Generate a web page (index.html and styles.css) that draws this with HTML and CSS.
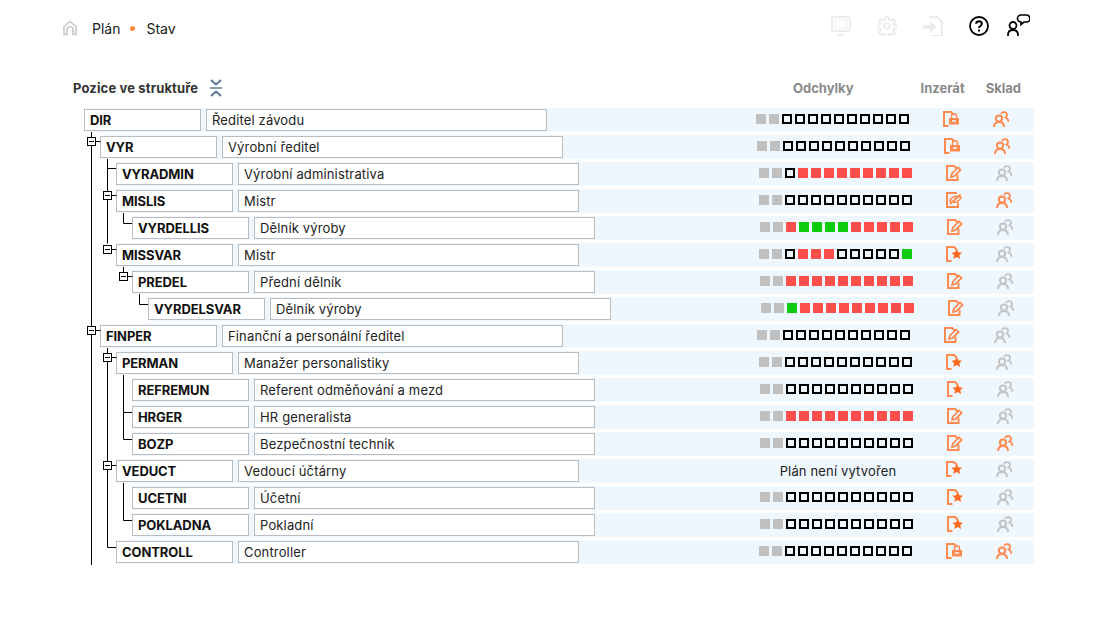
FILE: index.html
```html
<!DOCTYPE html>
<html lang="cs">
<head>
<meta charset="utf-8">
<title>Plán – Stav</title>
<link rel="stylesheet" href="styles.css">
</head>
<body>
<svg class="defs" width="0" height="0" aria-hidden="true">
  <symbol id="i-lock" viewBox="0 0 16 16">
    <path d="M5.500 15H1V1h7l2.800 2.800" fill="none" stroke="currentColor" stroke-width="2"/>
    <path d="M8.500 7V5.200a2.500 2.500 0 0 1 5 0V7" fill="none" stroke="currentColor" stroke-width="1.400"/>
    <path d="M6 7h10v6.500H6z M9 9.300v1.500h4V9.300z" fill="currentColor" fill-rule="evenodd"/>
  </symbol>
  <symbol id="i-edit" viewBox="0 0 16 16">
    <path d="M11.500 9.500V15H1V1h7.300L11 3.700" fill="none" stroke="currentColor" stroke-width="2"/>
    <path d="M5 12l.8-3.300 6.300-6.300 2.500 2.500-6.300 6.300z" fill="none" stroke="currentColor" stroke-width="1.800"/>
  </symbol>
  <symbol id="i-edit-x" viewBox="0 0 16 16">
    <path d="M12 10.500V15H1V1h10" fill="none" stroke="currentColor" stroke-width="2"/>
    <path d="M3.500 8.500C6 4.500 11 3 15.200 5.500 13 10 8 12 3.500 8.500z" fill="none" stroke="currentColor" stroke-width="1.500"/>
    <path d="M4 12L14.500 2.500" fill="none" stroke="currentColor" stroke-width="2"/>
  </symbol>
  <symbol id="i-star" viewBox="0 0 16 16">
    <path d="M5.500 15H1V1h7l2.800 2.800" fill="none" stroke="currentColor" stroke-width="2"/>
    <path class="star" d="M10.700 2.800l1.700 3.500 3.600.4-2.700 2.500.8 3.800-3.400-1.900L7.300 13l.8-3.800L5.400 6.700l3.700-.4z"/>
  </symbol>
  <symbol id="i-users" viewBox="0 0 16 16">
    <circle cx="6" cy="7.600" r="3.100" fill="none" stroke="currentColor" stroke-width="2"/>
    <path d="M1 16c0-3.500 2-5 5-5s5 1.500 5 5" fill="none" stroke="currentColor" stroke-width="2"/>
    <path d="M8 3C9 .4 14 .4 14 4c0 1-.5 2-1.500 2.500 1.700.6 3 2 3 4.500" fill="none" stroke="currentColor" stroke-width="1.800"/>
  </symbol>
</svg>

<header class="topbar">
  <nav class="crumbs">
    <svg class="home" viewBox="0 0 16 16" width="16" height="16"><path d="M2 14.500V6.500L8 1.500l6 5v8h-3V9.500a3 3 0 0 0-6 0v5z" fill="none" stroke="currentColor" stroke-width="1.600"/></svg>
    <span class="crumb">Plán</span>
    <span class="dot"></span>
    <span class="crumb">Stav</span>
  </nav>
  <div class="tools">
    <svg class="tool off" viewBox="0 0 20 20" width="20" height="20"><rect x="1" y="1" width="18" height="14" rx="2" fill="none" stroke="currentColor" stroke-width="2"/><path d="M4 4h12v8H4z" fill="none" stroke="currentColor" stroke-width="1"/><path d="M7 18h6v2H7z" fill="currentColor"/></svg>
    <svg class="tool off" viewBox="0 0 20 20" width="20" height="20"><circle cx="10" cy="10" r="2.800" fill="none" stroke="currentColor" stroke-width="2"/><path d="M8.500 1h3l.5 2.600 1.800.8 2.200-1.500 2 2.100-1.500 2.200.8 1.800 2.600.5v3l-2.600.5-.8 1.800 1.500 2.200-2 2.100-2.200-1.500-1.800.8-.5 2.600h-3l-.5-2.600-1.800-.8-2.200 1.500-2-2.100 1.500-2.200-.8-1.800-2.600-.5v-3l2.600-.5.8-1.800-1.500-2.200 2-2.100 2.200 1.500 1.800-.8z" fill="none" stroke="currentColor" stroke-width="2"/></svg>
    <svg class="tool off" viewBox="0 0 20 20" width="20" height="20"><path d="M7 3V1h7l5 5v14H8" fill="none" stroke="currentColor" stroke-width="2"/><path d="M0 9h7V5l6.500 6L7 17v-4H0z" fill="currentColor"/></svg>
    <svg class="tool" viewBox="0 0 20 20" width="20" height="20"><circle cx="10" cy="10" r="9" fill="none" stroke="currentColor" stroke-width="1.800"/><path d="M7.200 7.800c0-3.500 5.600-3.500 5.600 0 0 2.300-2.800 2.100-2.800 4.200" fill="none" stroke="currentColor" stroke-width="2"/><path d="M9 13.500h2v2H9z" fill="currentColor"/></svg>
    <svg class="tool chat" viewBox="0 0 23 23" width="23" height="23"><circle cx="6" cy="11.500" r="3.500" fill="none" stroke="currentColor" stroke-width="1.800"/><path d="M1 22v-1c0-3 2-5 5-5s5 2 5 5v1" fill="none" stroke="currentColor" stroke-width="1.800"/><path d="M14 1h5.500A3.500 3.500 0 0 1 23 4.500 3.500 3.500 0 0 1 19.500 8H17l-3 2.500V8a3.500 3.500 0 0 1-3.500-3.500A3.500 3.500 0 0 1 14 1z" fill="none" stroke="currentColor" stroke-width="1.700"/></svg>
  </div>
</header>

<section class="table">
  <div class="thead">
    <span class="th-main">Pozice ve struktuře</span>
    <svg class="collapse" viewBox="0 0 12 18" width="12" height="18"><path d="M1 1l5 4.500L11 1M1 17l5-4.500 5 4.500" fill="none" stroke="currentColor" stroke-width="1.800"/><path d="M0 8.300h12v1.400H0z" fill="currentColor"/></svg>
    <div class="th-cols">
      <span class="th-col dev-h">Odchylky</span>
      <span class="th-col ins-h">Inzerát</span>
      <span class="th-col">Sklad</span>
    </div>
  </div>

  <div class="tbody">
    <svg class="lines" width="100" height="460" viewBox="0 0 100 460" aria-hidden="true">
      <g class="ln">
        <path d="M7.500 24V457"/>
        <path d="M23.500 51V135.500M23.500 60.500H32M23.500 240V439.500H32"/>
        <path d="M39.500 105V115.500H48M39.500 159V164M39.500 267V331.500H48M39.500 304.500H48M39.500 375V412.500H48"/>
        <path d="M55.500 186V196.500H64"/>
        <path d="M12 33.500h4.500M12 222.500h4.500M28 87.500h4.500M28 141.500h4.500M28 249.500h4.500M28 357.500h4.500M44 168.500h4.500"/>
      </g>
      <g class="tg"><rect x="3.500" y="29.500" width="8" height="8"/><path d="M5 33.500h5"/></g>
      <g class="tg"><rect x="3.500" y="218.500" width="8" height="8"/><path d="M5 222.500h5"/></g>
      <g class="tg"><rect x="19.500" y="83.500" width="8" height="8"/><path d="M21 87.500h5"/></g>
      <g class="tg"><rect x="19.500" y="137.500" width="8" height="8"/><path d="M21 141.500h5"/></g>
      <g class="tg"><rect x="19.500" y="245.500" width="8" height="8"/><path d="M21 249.500h5"/></g>
      <g class="tg"><rect x="19.500" y="353.500" width="8" height="8"/><path d="M21 357.500h5"/></g>
      <g class="tg"><rect x="35.500" y="164.500" width="8" height="8"/><path d="M37 168.500h5"/></g>
    </svg>

    <div class="row l0"><span class="code">DIR</span><span class="name">Ředitel závodu</span>
      <div class="stats"><div class="dev"><i class="g"></i><i class="g"></i><i class="o"></i><i class="o"></i><i class="o"></i><i class="o"></i><i class="o"></i><i class="o"></i><i class="o"></i><i class="o"></i><i class="o"></i><i class="o"></i></div>
      <svg class="ico on"><use href="#i-lock"/></svg><svg class="ico on"><use href="#i-users"/></svg></div></div>

    <div class="row l1"><span class="code">VYR</span><span class="name">Výrobní ředitel</span>
      <div class="stats"><div class="dev"><i class="g"></i><i class="g"></i><i class="o"></i><i class="o"></i><i class="o"></i><i class="o"></i><i class="o"></i><i class="o"></i><i class="o"></i><i class="o"></i><i class="o"></i><i class="o"></i></div>
      <svg class="ico on"><use href="#i-lock"/></svg><svg class="ico on"><use href="#i-users"/></svg></div></div>

    <div class="row l2"><span class="code">VYRADMIN</span><span class="name">Výrobní administrativa</span>
      <div class="stats"><div class="dev"><i class="g"></i><i class="g"></i><i class="o"></i><i class="r"></i><i class="r"></i><i class="r"></i><i class="r"></i><i class="r"></i><i class="r"></i><i class="r"></i><i class="r"></i><i class="r"></i></div>
      <svg class="ico on"><use href="#i-edit"/></svg><svg class="ico off"><use href="#i-users"/></svg></div></div>

    <div class="row l2"><span class="code">MISLIS</span><span class="name">Mistr</span>
      <div class="stats"><div class="dev"><i class="g"></i><i class="g"></i><i class="o"></i><i class="o"></i><i class="o"></i><i class="o"></i><i class="o"></i><i class="o"></i><i class="o"></i><i class="o"></i><i class="o"></i><i class="o"></i></div>
      <svg class="ico on"><use href="#i-edit-x"/></svg><svg class="ico on"><use href="#i-users"/></svg></div></div>

    <div class="row l3"><span class="code">VYRDELLIS</span><span class="name">Dělník výroby</span>
      <div class="stats"><div class="dev"><i class="g"></i><i class="g"></i><i class="r"></i><i class="v"></i><i class="v"></i><i class="v"></i><i class="v"></i><i class="r"></i><i class="r"></i><i class="r"></i><i class="r"></i><i class="r"></i></div>
      <svg class="ico on"><use href="#i-edit"/></svg><svg class="ico off"><use href="#i-users"/></svg></div></div>

    <div class="row l2"><span class="code">MISSVAR</span><span class="name">Mistr</span>
      <div class="stats"><div class="dev"><i class="g"></i><i class="g"></i><i class="o"></i><i class="r"></i><i class="r"></i><i class="r"></i><i class="o"></i><i class="o"></i><i class="o"></i><i class="o"></i><i class="o"></i><i class="v"></i></div>
      <svg class="ico on"><use href="#i-star"/></svg><svg class="ico off"><use href="#i-users"/></svg></div></div>

    <div class="row l3"><span class="code">PREDEL</span><span class="name">Přední dělník</span>
      <div class="stats"><div class="dev"><i class="g"></i><i class="g"></i><i class="r"></i><i class="r"></i><i class="r"></i><i class="r"></i><i class="r"></i><i class="r"></i><i class="r"></i><i class="r"></i><i class="r"></i><i class="r"></i></div>
      <svg class="ico on"><use href="#i-edit"/></svg><svg class="ico off"><use href="#i-users"/></svg></div></div>

    <div class="row l4"><span class="code">VYRDELSVAR</span><span class="name">Dělník výroby</span>
      <div class="stats"><div class="dev"><i class="g"></i><i class="g"></i><i class="v"></i><i class="r"></i><i class="r"></i><i class="r"></i><i class="r"></i><i class="r"></i><i class="r"></i><i class="r"></i><i class="r"></i><i class="r"></i></div>
      <svg class="ico on"><use href="#i-edit"/></svg><svg class="ico off"><use href="#i-users"/></svg></div></div>

    <div class="row l1"><span class="code">FINPER</span><span class="name">Finanční a personální ředitel</span>
      <div class="stats"><div class="dev"><i class="g"></i><i class="g"></i><i class="o"></i><i class="o"></i><i class="o"></i><i class="o"></i><i class="o"></i><i class="o"></i><i class="o"></i><i class="o"></i><i class="o"></i><i class="o"></i></div>
      <svg class="ico on"><use href="#i-edit"/></svg><svg class="ico off"><use href="#i-users"/></svg></div></div>

    <div class="row l2"><span class="code">PERMAN</span><span class="name">Manažer personalistiky</span>
      <div class="stats"><div class="dev"><i class="g"></i><i class="g"></i><i class="o"></i><i class="o"></i><i class="o"></i><i class="o"></i><i class="o"></i><i class="o"></i><i class="o"></i><i class="o"></i><i class="o"></i><i class="o"></i></div>
      <svg class="ico on"><use href="#i-star"/></svg><svg class="ico off"><use href="#i-users"/></svg></div></div>

    <div class="row l3"><span class="code">REFREMUN</span><span class="name">Referent odměňování a mezd</span>
      <div class="stats"><div class="dev"><i class="g"></i><i class="g"></i><i class="o"></i><i class="o"></i><i class="o"></i><i class="o"></i><i class="o"></i><i class="o"></i><i class="o"></i><i class="o"></i><i class="o"></i><i class="o"></i></div>
      <svg class="ico on"><use href="#i-star"/></svg><svg class="ico off"><use href="#i-users"/></svg></div></div>

    <div class="row l3"><span class="code">HRGER</span><span class="name">HR generalista</span>
      <div class="stats"><div class="dev"><i class="g"></i><i class="g"></i><i class="r"></i><i class="r"></i><i class="r"></i><i class="r"></i><i class="r"></i><i class="r"></i><i class="r"></i><i class="r"></i><i class="r"></i><i class="r"></i></div>
      <svg class="ico on"><use href="#i-edit"/></svg><svg class="ico off"><use href="#i-users"/></svg></div></div>

    <div class="row l3"><span class="code">BOZP</span><span class="name">Bezpečnostní technik</span>
      <div class="stats"><div class="dev"><i class="g"></i><i class="g"></i><i class="o"></i><i class="o"></i><i class="o"></i><i class="o"></i><i class="o"></i><i class="o"></i><i class="o"></i><i class="o"></i><i class="o"></i><i class="o"></i></div>
      <svg class="ico on"><use href="#i-edit"/></svg><svg class="ico on"><use href="#i-users"/></svg></div></div>

    <div class="row l2"><span class="code">VEDUCT</span><span class="name">Vedoucí účtárny</span>
      <div class="stats"><div class="dev noplan">Plán není vytvořen</div>
      <svg class="ico on high"><use href="#i-star"/></svg><svg class="ico off high"><use href="#i-users"/></svg></div></div>

    <div class="row l3"><span class="code">UCETNI</span><span class="name">Účetní</span>
      <div class="stats"><div class="dev"><i class="g"></i><i class="g"></i><i class="o"></i><i class="o"></i><i class="o"></i><i class="o"></i><i class="o"></i><i class="o"></i><i class="o"></i><i class="o"></i><i class="o"></i><i class="o"></i></div>
      <svg class="ico on"><use href="#i-star"/></svg><svg class="ico off"><use href="#i-users"/></svg></div></div>

    <div class="row l3"><span class="code">POKLADNA</span><span class="name">Pokladní</span>
      <div class="stats"><div class="dev"><i class="g"></i><i class="g"></i><i class="o"></i><i class="o"></i><i class="o"></i><i class="o"></i><i class="o"></i><i class="o"></i><i class="o"></i><i class="o"></i><i class="o"></i><i class="o"></i></div>
      <svg class="ico on"><use href="#i-star"/></svg><svg class="ico off"><use href="#i-users"/></svg></div></div>

    <div class="row l2"><span class="code">CONTROLL</span><span class="name">Controller</span>
      <div class="stats"><div class="dev"><i class="g"></i><i class="g"></i><i class="o"></i><i class="o"></i><i class="o"></i><i class="o"></i><i class="o"></i><i class="o"></i><i class="o"></i><i class="o"></i><i class="o"></i><i class="o"></i></div>
      <svg class="ico on"><use href="#i-lock"/></svg><svg class="ico on"><use href="#i-users"/></svg></div></div>
  </div>
</section>
</body>
</html>
```
FILE: styles.css
```css
* { box-sizing: border-box; }
html, body { margin: 0; padding: 0; }
body {
  width: 1100px;
  height: 635px;
  overflow: hidden;
  background: #fff;
  color: #222;
  font-family: "Inter", "Noto Sans", sans-serif;
  font-size: 13px;
  letter-spacing: .15px;
}
.defs { position: absolute; }

.topbar {
  display: flex;
  justify-content: space-between;
  align-items: flex-start;
  height: 78px;
  padding: 16px 70px 0 62px;
}
.crumbs { display: flex; align-items: center; height: 24px; }
.home { color: #c8c8c8; margin-right: 14px; }
.crumb { font-size: 14px; letter-spacing: 0; }
.dot { width: 5px; height: 5px; border-radius: 50%; background: #ff8a3c; margin: 0 11px 0 10px; }
.tools { display: flex; gap: 26px; align-items: flex-start; }
.tool { color: #000; display: block; }
.tool.off { color: #ececec; }
.tool.chat { margin-left: -8px; margin-top: -2px; }

.thead {
  display: flex;
  align-items: center;
  height: 30px;
  padding: 0 79px 0 73px;
  margin-top: -5px;
  font-weight: 700;
}
.th-main { color: #333; }
.collapse { color: #4f7396; margin-left: 12px; }
.th-cols { display: flex; margin-left: auto; }
.th-col { color: #8a8a8a; letter-spacing: 0; }
.dev-h { margin-right: 67px; }
.ins-h { margin-right: 21px; }

.tbody { position: relative; padding-top: 5px; display: flex; flex-direction: column; gap: 3px; }
.lines { position: absolute; left: 84px; top: 5px; overflow: visible; pointer-events: none; z-index: 2; }
.ln path { fill: none; stroke: #000; stroke-width: 1; }
.tg rect { fill: #fff; stroke: #000; stroke-width: 1; }
.tg path { fill: none; stroke: #000; stroke-width: 1; }

.row {
  display: flex;
  align-items: flex-start;
  height: 24px;
  margin-right: 66px;
  padding-top: 1px;
  background: #eff7fe;
}
.l0 { margin-left: 84px; --shift: 25px; }
.l1 { margin-left: 100px; --shift: 24px; }
.l2 { margin-left: 116px; --shift: 22px; }
.l3 { margin-left: 132px; --shift: 21px; }
.l4 { margin-left: 148px; --shift: 20px; }

.code, .name {
  display: block;
  height: 22px;
  line-height: 20px;
  background: #fff;
  border: 1px solid #b9bdc1;
  white-space: nowrap;
}
.code { width: 117px; padding: 0 5px; font-weight: 700; color: #111; margin-right: 5px; letter-spacing: -.1px; }
.name { width: 341px; padding: 0 5px; }

.stats {
  display: flex;
  align-items: flex-start;
  gap: 34px;
  margin-left: auto;
  padding-right: var(--shift);
}
.dev { display: flex; gap: 3px; width: 153px; margin-top: 5px; }
.dev i { display: block; width: 10px; height: 10px; }
.dev .g { background: #c0c0c0; }
.dev .o { border: 2px solid #000; }
.dev .r { background: #fc4e4b; }
.dev .v { background: #0dcb0d; }
.dev.noplan { justify-content: center; margin-top: 3px; padding-left: 5px; height: 16px; line-height: 16px; white-space: nowrap; }

.ico { display: block; width: 16px; height: 16px; margin-top: 2px; }
.ico.on { color: #ff8a50; }
.ico.off { color: #c4c4c4; }
.ico.high { margin-top: 1px; }
.star { fill: #ff6a20; }
```
